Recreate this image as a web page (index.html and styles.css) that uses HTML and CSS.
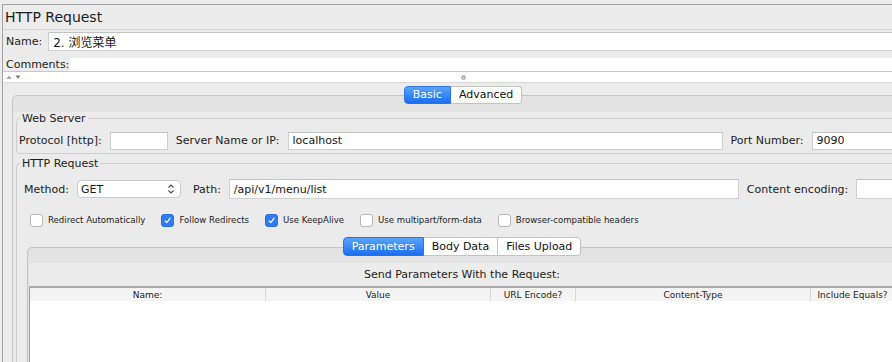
FILE: index.html
```html
<!DOCTYPE html>
<html lang="zh-CN">
<head>
    <meta charset="UTF-8">
    <meta name="viewport" content="width=device-width, initial-scale=1.0">
    <title>HTTP Request</title>
    <link rel="stylesheet" href="styles.css">
</head>
<body>
    <div class="frame">
        <div class="title">HTTP Request</div>

        <div class="line-row name-row">
            <label for="name">Name:</label>
            <input id="name" class="text" type="text" value="2. 浏览菜单">
        </div>
        <div class="line-row comments-row">
            <label for="comments">Comments:</label>
            <input id="comments" class="text" type="text">
        </div>

        <div class="split">
            <svg class="split-arrows" width="15" height="4" viewBox="0 0 15 4">
                <path d="M0.5 4 L3 0.5 L5.5 4 Z" fill="#a4a4a4"/>
                <path d="M9.5 0.5 L14.5 0.5 L12 4 Z" fill="#7c7c7c"/>
            </svg>
            <span class="grip"></span>
            <span></span>
        </div>

        <div class="tabpane main-pane">
            <div class="tabs">
                <span class="tab active">Basic</span><span class="tab">Advanced</span>
            </div>
            <div class="tab-body">
                <div class="panel">
                    <fieldset class="group web-server">
                        <legend>Web Server</legend>
                        <div class="row">
                            <label>Protocol [http]:</label>
                            <input class="text protocol" type="text">
                            <label>Server Name or IP:</label>
                            <input class="text server" type="text" value="localhost">
                            <label>Port Number:</label>
                            <input class="text port" type="text" value="9090">
                        </div>
                    </fieldset>

                    <fieldset class="group http-request">
                        <legend>HTTP Request</legend>
                        <div class="row method-row">
                            <label>Method:</label>
                            <div class="combo">
                                <span>GET</span>
                                <svg width="8" height="12" viewBox="0 0 8 12">
                                    <path d="M1.5 4.5 L4 2 L6.5 4.5" fill="none" stroke="#4a4a4a" stroke-width="1.1"/>
                                    <path d="M1.5 7.5 L4 10 L6.5 7.5" fill="none" stroke="#4a4a4a" stroke-width="1.1"/>
                                </svg>
                            </div>
                            <label>Path:</label>
                            <input class="text path" type="text" value="/api/v1/menu/list">
                            <label>Content encoding:</label>
                            <input class="text encoding" type="text">
                        </div>

                        <div class="checks">
                            <label class="check"><span class="box"></span>Redirect Automatically</label>
                            <label class="check"><span class="box on"><svg viewBox="0 0 13 13"><path d="M3.6 6.9 L5.6 9 L9.5 3.9" fill="none" stroke="#fff" stroke-width="1.5" stroke-linecap="round" stroke-linejoin="round"/></svg></span>Follow Redirects</label>
                            <label class="check"><span class="box on"><svg viewBox="0 0 13 13"><path d="M3.6 6.9 L5.6 9 L9.5 3.9" fill="none" stroke="#fff" stroke-width="1.5" stroke-linecap="round" stroke-linejoin="round"/></svg></span>Use KeepAlive</label>
                            <label class="check"><span class="box"></span>Use multipart/form-data</label>
                            <label class="check"><span class="box"></span>Browser-compatible headers</label>
                        </div>

                        <div class="tabpane params-pane">
                            <div class="tabs">
                                <span class="tab active">Parameters</span><span class="tab">Body Data</span><span class="tab">Files Upload</span>
                            </div>
                            <div class="tab-body">
                                <div class="panel">
                                    <div class="caption">Send Parameters With the Request:</div>
                                    <table class="params">
                                        <colgroup>
                                            <col style="width: 236px">
                                            <col style="width: 225px">
                                            <col style="width: 85px">
                                            <col style="width: 235px">
                                            <col>
                                        </colgroup>
                                        <thead>
                                            <tr>
                                                <th>Name:</th>
                                                <th>Value</th>
                                                <th>URL Encode?</th>
                                                <th>Content-Type</th>
                                                <th>Include Equals?</th>
                                            </tr>
                                        </thead>
                                        <tbody>
                                            <tr><td colspan="5"></td></tr>
                                        </tbody>
                                    </table>
                                </div>
                            </div>
                        </div>
                    </fieldset>
                </div>
            </div>
        </div>
    </div>
</body>
</html>
```

FILE: styles.css
```css
* { box-sizing: border-box; }
html, body { margin: 0; height: 100%; overflow: hidden; }
body {
    background: #ececec;
    font-family: "DejaVu Sans", "Noto Sans CJK SC", sans-serif;
    font-size: 11px;
    color: #1c1c1c;
}

.frame {
    width: 921px; height: 420px;
    margin: 4px 0 0 2px;
    border-top: 1px solid #a2a2a2;
    border-left: 1px solid #a2a2a2;
}
.title {
    height: 25px; padding-left: 2px;
    font-size: 14px; line-height: 24px;
    border-bottom: 1px solid #d2d2d2;
}

/* text fields */
.text {
    margin: 0; height: 18px; padding: 0 4px;
    border: 1px solid #cfcfcf; border-top-color: #c4c4c4;
    background: #fff; color: #161616;
    font: inherit; outline: none;
}

.line-row { display: flex; padding-left: 3px; }
.line-row label { margin-right: 6px; }
.name-row { height: 23px; padding-top: 2px; align-items: flex-start; }
.name-row label { line-height: 19px; }
.name-row .text { flex: 1; height: 19px; font-size: 12px; }
.comments-row { height: 18px; padding-top: 5px; align-items: flex-start; }
.comments-row label { line-height: 13px; margin-right: 1px; }
.comments-row .text { flex: 1; height: 13px; border: 0; }

.split {
    display: grid; grid-template-columns: 1fr auto 1fr; align-items: center;
    height: 12px; background: #fff;
    border-top: 1px solid #c9c9c9; border-bottom: 1px solid #dadada;
}
.split-arrows { margin-left: 3px; display: block; }
.grip {
    width: 5px; height: 5px; border-radius: 50%;
    background: #c4c4c4; border: 1px solid #acacac;
}

/* tabbed panes */
.main-pane { margin: 3px 9px 0; }
.tabs {
    display: flex; justify-content: center;
    position: relative; z-index: 1; margin-bottom: -9px;
}
.tab {
    height: 18px; line-height: 16px; padding: 0 8px;
    background: #fff; color: #111;
    border: 1px solid #c3c3c3; border-left-width: 0;
}
.tab:first-child { border-left-width: 1px; border-radius: 4px 0 0 4px; }
.tab:last-child { border-radius: 0 4px 4px 0; }
.tab.active {
    background: linear-gradient(#58a5fd, #1b6ff3);
    border-color: #2a72e6; color: #fff;
}
.tab-body {
    background: #e3e3e3;
    border: 1px solid #c4c4c4; border-radius: 5px;
    padding-top: 16px;
}
.panel { background: #ebebeb; padding: 0 3px; }

/* titled groups */
.group {
    margin: 0; min-width: 0;
    border: 1px solid #cfcfcf; border-radius: 4px;
    padding: 5px 2px 2px;
}
.group legend { padding: 1px 2px 0; margin-left: 1px; line-height: 12px; }
.row { display: flex; align-items: center; gap: 8px; height: 21px; white-space: nowrap; }
.row > * { flex: none; }
.protocol { width: 58px; }
.server { width: 435px; }
.port { width: 120px; }

.http-request { margin-top: 3px; padding: 8px 7px 0; }
.http-request legend { margin-left: -4px; }
.method-row { height: 22px; }
.combo {
    width: 104px; height: 18px; margin-right: 4px; padding: 0 5px 0 3px;
    display: flex; align-items: center; justify-content: space-between;
    background: #fff; border: 1px solid #cbcbcb; border-radius: 4px;
}
.combo svg { display: block; }
.path { width: 510px; height: 20px; }
.encoding { width: 80px; height: 20px; }

.checks {
    display: flex; align-items: center; gap: 16px;
    height: 16px; margin: 12px 0 0 6px;
    font-size: 8.6px; white-space: nowrap;
}
.check { display: flex; align-items: center; gap: 5px; flex: none; }
.box {
    width: 13px; height: 13px; flex: none;
    background: #fff; border: 1px solid #b8b8b8; border-radius: 3px;
}
.box.on { background: #2f7cf6; border-color: #2a6fe0; }
.box svg { display: block; width: 11px; height: 11px; }

.params-pane { margin: 9px 5px 0 3px; }
.params-pane .tab { height: 19px; line-height: 17px; }
.params-pane .tab-body { padding: 15px 1px 0; border-radius: 5px 5px 0 0; }
.params-pane .panel { padding: 0; background: #ececec; }
.caption { height: 23px; line-height: 23px; text-align: center; }

.params {
    width: 100%; border-collapse: collapse; table-layout: fixed;
    background: #fff;
    border-top: 2px solid #a9a9a9; border-left: 1px solid #9e9e9e;
}
.params th {
    height: 14px; padding: 0;
    font-size: 9px; font-weight: normal;
    background: #f4f4f4; border-right: 1px solid #d8d8d8;
}
.params td { height: 80px; }
```
